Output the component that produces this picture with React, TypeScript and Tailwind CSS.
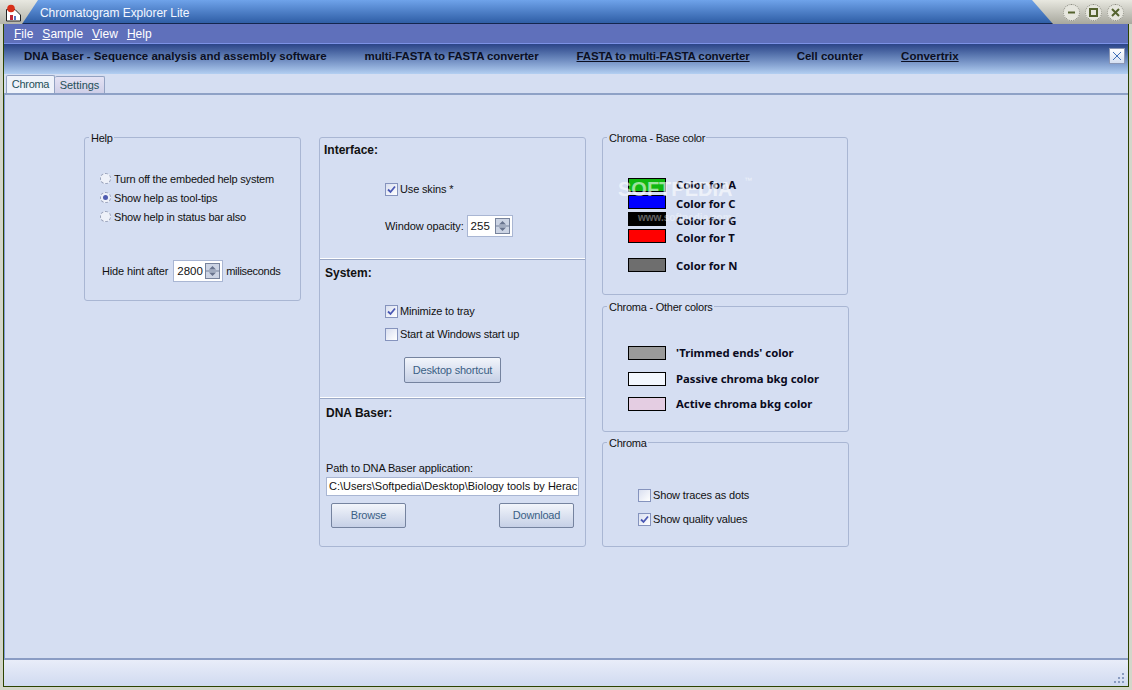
import type { ReactNode } from "react"

const font = "font-['Liberation_Sans',Arial,sans-serif]"
const labelBold = "font-['Noto_Sans',sans-serif] text-[11.3px] font-bold leading-[14px] text-[#0a0a20]"

function GroupBox({ title, className, children }: { title: string; className: string; children: ReactNode }) {
  return (
    <fieldset className={"relative rounded-[3px] border border-[#a9b6d3] " + className}>
      <span className="absolute left-[4px] top-[-6px] bg-[#d5def2] pl-[2px] pr-[1px] text-[11px] leading-[13px] tracking-[-0.25px] text-[#111]">
        {title}
      </span>
      {children}
    </fieldset>
  )
}

function Check({ checked, label, className }: { checked?: boolean; label: string; className?: string }) {
  return (
    <div className={"flex items-center " + (className ?? "")}>
      <span className="flex h-[13px] w-[13px] items-center justify-center border border-[#8593bd] bg-gradient-to-br from-[#d9dff0] to-white">
        {checked && (
          <svg width="9" height="9" viewBox="0 0 9 9">
            <path d="M1 4.5 L3.5 7 L8 1.5" fill="none" stroke="#4a58b4" strokeWidth="1.8" />
          </svg>
        )}
      </span>
      <span className="ml-[2px] text-[11px] leading-[14px] tracking-[-0.15px] text-[#111]">{label}</span>
    </div>
  )
}

function Radio({ checked, label }: { checked?: boolean; label: string }) {
  return (
    <div className="flex h-[19px] items-center">
      <span className="flex h-[11px] w-[11px] items-center justify-center rounded-full border border-dashed border-[#9aa3bb] bg-[#eef1f9]">
        {checked && <span className="h-[5px] w-[5px] rounded-full bg-[#4f5cb0]" />}
      </span>
      <span className="ml-[3px] text-[11px] leading-[14px] tracking-[-0.2px] text-[#111]">{label}</span>
    </div>
  )
}

function Spin({ value, className }: { value: string; className: string }) {
  return (
    <div className={"flex h-[22px] items-center justify-between border border-[#a9b6d3] bg-white pl-[3px] pr-[2px] " + className}>
      <span className="text-[11.5px] leading-[14px] text-[#111]">{value}</span>
      <svg width="15" height="16" viewBox="0 0 15 16">
        <rect x="0.5" y="0.5" width="14" height="15" fill="#ccd4e4" stroke="#77839c" />
        <path d="M0.5 8 H14.5" stroke="#77839c" />
        <path d="M7.5 3 L11 6.5 H4 Z M7.5 13 L11 9.5 H4 Z" fill="#68748e" />
      </svg>
    </div>
  )
}

function Btn({ label, className }: { label: string; className: string }) {
  return (
    <div className={"flex h-[25px] items-center justify-center rounded-[2px] border border-[#75839f] bg-gradient-to-b from-[#f2f5fb] to-[#c6d0e6] text-[11px] tracking-[-0.2px] text-[#3a5f85] " + className}>
      {label}
    </div>
  )
}

function Swatch({ color, label, className, labelClass }: { color: string; label: string; className: string; labelClass?: string }) {
  return (
    <div className={"flex items-start " + className}>
      <span className={"h-[14px] w-[38px] border border-black " + color} />
      <span className={"ml-[10px] " + labelBold + " " + (labelClass ?? "")}>{label}</span>
    </div>
  )
}

function U({ first, rest }: { first: string; rest: string }) {
  return (
    <span>
      <span className="underline">{first}</span>
      {rest}
    </span>
  )
}

function WinButton({ children }: { children: ReactNode }) {
  return (
    <span className="flex h-[17px] w-[17px] items-center justify-center rounded-full border border-dotted border-[#8a8a80] bg-[#e6e6de]">
      <svg width="11" height="11" viewBox="0 0 11 11" fill="none" stroke="#55632f" strokeWidth="2">
        {children}
      </svg>
    </span>
  )
}

export default function App() {
  return (
    <div className={"flex h-[690px] w-[1132px] flex-col overflow-hidden bg-[#d5def2] " + font}>
      {/* title bar */}
      <div className="relative flex h-[24px] shrink-0 items-center border-b border-[#14264e] bg-gradient-to-b from-[#6fa3ea] to-[#2f5ea6] pl-[40px] pt-[2px]">
        <div className="absolute left-0 top-0 h-[24px] w-[38px] bg-gradient-to-b from-[#e8e8e0] to-[#b4b4aa] [clip-path:polygon(0_0,100%_0,58%_100%,0_100%)]" />
        <svg className="absolute left-[5px] top-[4px]" width="17" height="18" viewBox="0 0 17 18">
          <path d="M1.5 5.5 H10 L15.5 11 V17 H1.5 Z" fill="#fff" stroke="#222" />
          <circle cx="6" cy="4.5" r="3.8" fill="#d83018" />
          <rect x="5" y="11" width="3" height="5" fill="#c02838" />
          <rect x="9" y="12" width="2" height="4" fill="#5878c0" />
        </svg>
        <span className="relative text-[12px] leading-[16px] tracking-[-0.05px] text-[#f2f6ff]">Chromatogram Explorer Lite</span>
        <div className="absolute right-0 top-0 flex h-[24px] w-[100px] items-center justify-end gap-[5px] bg-gradient-to-b from-[#e8e8e0] to-[#a8a89e] pr-[8px] [clip-path:polygon(0_0,100%_0,100%_100%,21%_100%)]">
          <WinButton>
            <path d="M2 5.5 H9" />
          </WinButton>
          <WinButton>
            <rect x="2" y="2" width="7" height="7" />
          </WinButton>
          <WinButton>
            <path d="M2 2 L9 9 M9 2 L2 9" />
          </WinButton>
        </div>
      </div>

      {/* window frame */}
      <div className="flex min-h-0 flex-1 flex-col border-x-[3px] border-b-[3px] border-[#d3d6ca]">
        <div className="flex min-h-0 flex-1 flex-col border-x border-b border-[#2d4300]">
          <div className="flex min-h-0 flex-1 flex-col">
            {/* menu */}
            <div className="flex h-[20px] shrink-0 items-center gap-[9px] border-b border-[#7c92e6] bg-[#5f70bb] pl-[10px] text-[12px] text-white">
              <U first="F" rest="ile" />
              <U first="S" rest="ample" />
              <U first="V" rest="iew" />
              <U first="H" rest="elp" />
            </div>

            {/* banner */}
            <div className="relative flex h-[30px] shrink-0 items-center bg-gradient-to-b from-[#2b4488] to-[#b3cff2] pb-[4px] pl-[20px] text-[11.5px] font-bold text-[#0b0f22]">
              <span>DNA Baser - Sequence analysis and assembly software</span>
              <span className="ml-[38px] tracking-[-0.1px]">multi-FASTA to FASTA converter</span>
              <span className="ml-[38px] tracking-[-0.13px] underline">FASTA to multi-FASTA converter</span>
              <span className="ml-[47px]">Cell counter</span>
              <span className="ml-[38px] underline">Convertrix</span>
              <span className="absolute right-[3px] top-[4px] flex h-[16px] w-[16px] items-center justify-center border border-[#8a96b4] bg-gradient-to-b from-white to-[#d6e0f2]">
                <svg width="10" height="10" viewBox="0 0 10 10">
                  <path d="M1 1 L9 9 M9 1 L1 9" stroke="#3f6fb8" />
                </svg>
              </span>
            </div>

            {/* tabs */}
            <div className="flex h-[21px] shrink-0 items-end border-b-2 border-[#8ea1c6] pl-[2px] pt-[3px] text-[11px] text-[#254f58]">
              <div className="flex h-[18px] w-[49px] items-center justify-center rounded-t-[2px] border border-b-0 border-[#93a2c2] bg-[#eef2fa] tracking-[-0.3px]">Chroma</div>
              <div className="flex h-[17px] w-[50px] items-center justify-center rounded-t-[2px] border border-b-0 border-l-0 border-[#93a2c2] bg-gradient-to-b from-[#e4e2f4] to-[#cfcfe8]">Settings</div>
            </div>

            {/* settings page */}
            <div className="flex min-h-0 flex-1 items-start border-b-2 border-l border-[#8a9cc4] border-l-[#7f9ad6] pl-[79px] pt-[42px]">
              <GroupBox title="Help" className="h-[164px] w-[217px] pl-[15px] pt-[31px]">
                <Radio label="Turn off the embeded help system" />
                <Radio checked label="Show help as tool-tips" />
                <Radio label="Show help in status bar also" />
                <div className="ml-[2px] mt-[34px] flex items-center text-[11px] text-[#111]">
                  <span className="tracking-[-0.15px]">Hide hint after</span>
                  <Spin value="2800" className="ml-[5px] mr-[3px] w-[50px]" />
                  <span className="tracking-[-0.3px]">miliseconds</span>
                </div>
              </GroupBox>

              <div className="ml-[18px] h-[410px] w-[267px] rounded-[3px] border border-[#a9b6d3]">
                <div className="h-[122px] border-b border-[#9aa8c6] pl-[4px] pt-[4px] shadow-[inset_0_-1px_0_#fff]">
                  <div className="text-[12px] font-bold leading-[16px] text-[#111]">Interface:</div>
                  <Check checked label="Use skins *" className="ml-[61px] mt-[24px]" />
                  <div className="ml-[61px] mt-[19px] flex items-center text-[11px] text-[#111]">
                    <span className="tracking-[-0.1px]">Window opacity:</span>
                    <Spin value="255" className="ml-[3px] w-[46px]" />
                  </div>
                </div>
                <div className="h-[139px] border-b border-[#9aa8c6] pl-[5px] pt-[5px] shadow-[inset_0_-1px_0_#fff]">
                  <div className="text-[12px] font-bold leading-[16px] text-[#111]">System:</div>
                  <Check checked label="Minimize to tray" className="ml-[60px] mt-[23px]" />
                  <Check label="Start at Windows start up" className="ml-[60px] mt-[9px]" />
                  <Btn label="Desktop shortcut" className="ml-[79px] mt-[16px] !h-[26px] w-[97px]" />
                </div>
                <div className="pl-[6px] pt-[6px]">
                  <div className="text-[12px] font-bold leading-[16px] text-[#111]">DNA Baser:</div>
                  <div className="mt-[40px] text-[11px] leading-[14px] tracking-[-0.14px] text-[#111]">Path to DNA Baser application:</div>
                  <div className="mt-[2px] flex h-[19px] w-[253px] items-center overflow-hidden whitespace-nowrap border border-[#a9b6d3] bg-white pl-[2px] text-[11px] text-[#111]">
                    C:\Users\Softpedia\Desktop\Biology tools by Herac
                  </div>
                  <div className="mt-[7px] flex w-[248px] justify-between pl-[5px]">
                    <Btn label="Browse" className="w-[75px]" />
                    <Btn label="Download" className="w-[75px]" />
                  </div>
                </div>
              </div>

              <div className="ml-[16px] flex w-[247px] flex-col">
                <GroupBox title="Chroma - Base color" className="h-[158px] w-[246px] pl-[25px] pt-[40px]">
                  <Swatch color="bg-[#10b810]" label="Color for A" className="h-[17px]" />
                  <Swatch color="bg-[#0000ff]" label="Color for C" className="h-[17px]" labelClass="mt-[2px]" />
                  <Swatch color="bg-black" label="Color for G" className="h-[17px]" labelClass="mt-[2px]" />
                  <Swatch color="bg-[#ff0000]" label="Color for T" className="h-[29px]" labelClass="mt-[2px]" />
                  <Swatch color="bg-[#6e6e6e]" label="Color for N" className="h-[17px]" labelClass="mt-[1px]" />
                  <span className="absolute left-[15px] top-[40px] text-[20px] font-bold leading-[22px] text-white/60">SOFTPEDIA</span>
                  <span className="absolute left-[141px] top-[38px] text-[8px] leading-[10px] text-white/60">™</span>
                  <span className="absolute left-[35px] top-[74px] text-[10px] font-bold leading-[12px] text-white/40">www.softpedia.com</span>
                </GroupBox>
                <GroupBox title="Chroma - Other colors" className="mt-[11px] h-[126px] w-[247px] pl-[25px] pt-[39px]">
                  <Swatch color="bg-[#9a9a9a]" label="'Trimmed ends' color" className="h-[26px]" />
                  <Swatch color="bg-[#f3f7fe]" label="Passive chroma bkg color" className="h-[25px]" />
                  <Swatch color="bg-[#e4cde2]" label="Active chroma bkg color" className="h-[17px]" />
                </GroupBox>
                <GroupBox title="Chroma" className="mt-[10px] h-[105px] w-[247px] pl-[35px] pt-[45px]">
                  <Check label="Show traces as dots" />
                  <Check checked label="Show quality values" className="mt-[10px]" />
                </GroupBox>
              </div>
            </div>

            {/* status bar */}
            <div className="flex h-[26px] shrink-0 items-end justify-end bg-gradient-to-b from-[#e9edf9] to-[#d0daf0] pb-[1px] pr-[2px]">
              <svg width="13" height="13" viewBox="0 0 13 13" fill="#8a9cc0">
                <rect x="9" y="1" width="2" height="2" />
                <rect x="5" y="5" width="2" height="2" />
                <rect x="9" y="5" width="2" height="2" />
                <rect x="1" y="9" width="2" height="2" />
                <rect x="5" y="9" width="2" height="2" />
                <rect x="9" y="9" width="2" height="2" />
              </svg>
            </div>
          </div>
        </div>
      </div>
    </div>
  )
}
